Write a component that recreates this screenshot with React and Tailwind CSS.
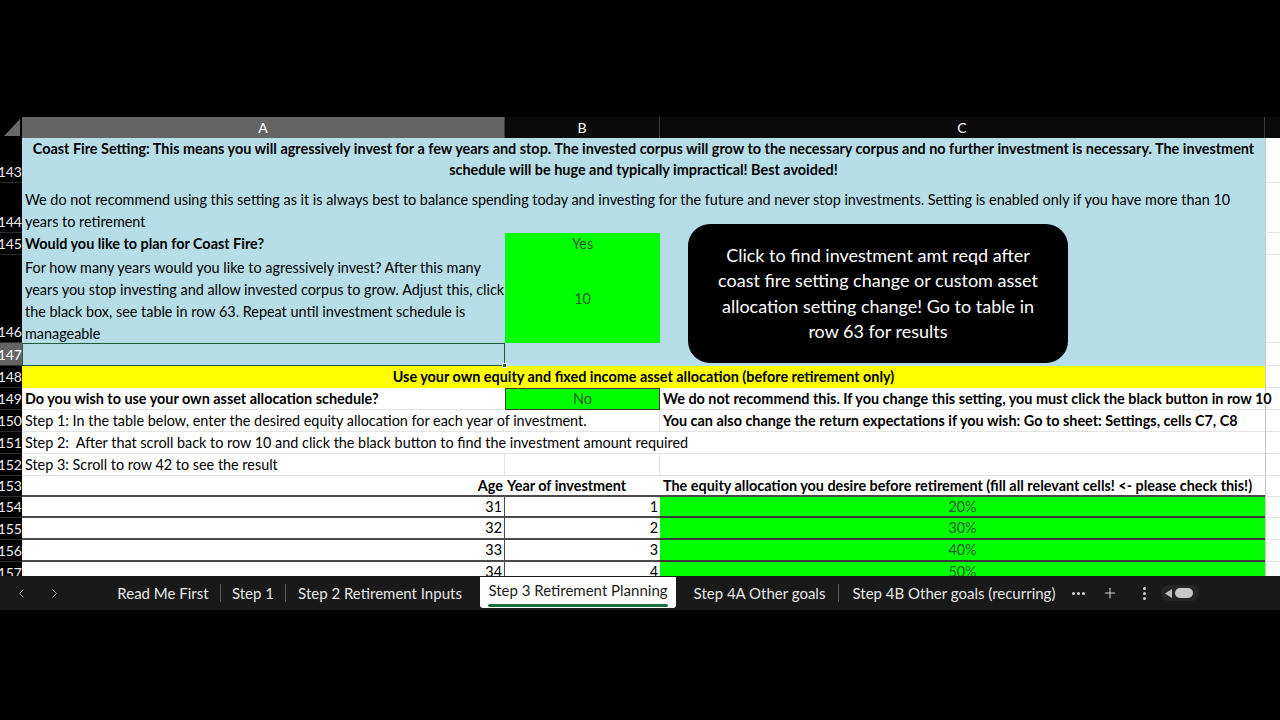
import React from "react";
import { ChevronLeft, ChevronRight, Plus } from "lucide-react";

const Row = ({ h, n, sel = false, children }) => (
  <div className={`flex ${h}`}>
    <div
      className={`w-[22px] shrink-0 flex items-end justify-end overflow-hidden border-b border-[#2e2e2e] text-[14px] leading-[20px] ${
        sel ? "bg-[#646464] text-white" : "bg-black text-[#eeeeee]"
      }`}
    >
      {n}
    </div>
    {children}
  </div>
);

const Dcell = ({ line = true }) => (
  <div className={`flex-1 bg-white border-l border-[#c8c8c8] ${line ? "border-b border-b-[#e3e3e3]" : ""}`} />
);

const ColumnHeader = () => (
  <div className="flex h-[21px] text-white text-[14px] leading-[21px]">
    <div className="w-[22px] shrink-0 bg-black flex items-end justify-end p-[2px]">
      <svg width="16" height="17" viewBox="0 0 16 17">
        <polygon points="16,0 16,17 0,17" fill="#6a6a6a" />
      </svg>
    </div>
    <div className="w-[483px] shrink-0 bg-[#646464] text-center border-r border-[#3a3a3a]">A</div>
    <div className="w-[155px] shrink-0 bg-[#0b0b0b] text-center border-r border-[#3a3a3a]">B</div>
    <div className="w-[605px] shrink-0 bg-[#0b0b0b] text-center border-r border-[#3a3a3a]">C</div>
    <div className="flex-1 bg-[#0b0b0b]" />
  </div>
);

const Tab = ({ w, children }) => (
  <div className={`${w} shrink-0 text-center whitespace-nowrap text-[#e6e6e6]`}>{children}</div>
);

const Sep = () => <div className="w-px h-[18px] bg-[#5a5a5a] shrink-0" />;

const TabBar = () => (
  <div className="h-[34px] bg-[#191919] flex items-center text-[15px]">
    <div className="w-[106px] shrink-0 flex items-center text-[#b0b0b0]">
      <ChevronLeft size={15} strokeWidth={1.5} className="ml-[14px]" />
      <ChevronRight size={15} strokeWidth={1.5} className="ml-[18px]" />
    </div>
    <Tab w="w-[114px]">Read Me First</Tab>
    <Sep />
    <Tab w="w-[64px]">Step 1</Tab>
    <Sep />
    <Tab w="w-[188px]">Step 2 Retirement Inputs</Tab>
    <div className="w-[6px] shrink-0" />
    <div className="w-[196px] h-[31px] self-start mt-[1px] shrink-0 bg-white rounded-b-[3px] flex flex-col items-center">
      <span className="text-[#1c1c1c] leading-[27px] whitespace-nowrap">Step 3 Retirement Planning</span>
      <div className="w-[180px] h-[3px] bg-[#1e7145] rounded-full" />
    </div>
    <Tab w="w-[162px] pl-[5px]">Step 4A Other goals</Tab>
    <Sep />
    <Tab w="w-[230px]">Step 4B Other goals (recurring)</Tab>
    <div className="w-[3px] shrink-0" />
    <div className="flex gap-[2px] items-center">
      <span className="w-[3px] h-[3px] rounded-full bg-[#d8d8d8]" />
      <span className="w-[3px] h-[3px] rounded-full bg-[#d8d8d8]" />
      <span className="w-[3px] h-[3px] rounded-full bg-[#d8d8d8]" />
    </div>
    <Plus size={16} strokeWidth={1.6} className="ml-[17px] text-[#d0d0d0]" />
    <div className="ml-[25px] flex flex-col gap-[2px] items-center">
      <span className="w-[3px] h-[3px] rounded-full bg-[#d0d0d0]" />
      <span className="w-[3px] h-[3px] rounded-full bg-[#d0d0d0]" />
      <span className="w-[3px] h-[3px] rounded-full bg-[#d0d0d0]" />
    </div>
    <div className="ml-[15px] w-[38px] h-[16px] rounded-full bg-[#262626] flex items-center px-[4px] gap-[3px]">
      <svg width="7" height="9" viewBox="0 0 7 9">
        <polygon points="7,0 7,9 0,4.5" fill="#bdbdbd" />
      </svg>
      <div className="w-[18px] h-[10px] rounded-full bg-[#c9c9c9]" />
    </div>
  </div>
);

export default function App() {
  return (
    <div className="w-[1280px] h-[720px] bg-black overflow-hidden font-['Lato',sans-serif] text-[14.4px] text-black">
      <div className="h-[117px]" />
      <div className="relative h-[459px] overflow-hidden">
        <ColumnHeader />

        <Row h="h-[45px]" n="143">
          <div className="w-[1243px] shrink-0 bg-[#b7dee8] font-bold text-center leading-[21px] whitespace-nowrap">
            Coast Fire Setting: This means you will agressively invest for a few years and stop. The invested corpus will grow to the necessary corpus and no further investment is necessary. The investment
            <br />
            schedule will be huge and typically impractical! Best avoided!
          </div>
          <Dcell />
        </Row>

        <Row h="h-[50px]" n="144">
          <div className="w-[1243px] shrink-0 bg-[#b7dee8] flex flex-col justify-end leading-[22px] pl-[3px] whitespace-nowrap">
            <span>
              We do not recommend using this setting as it is always best to balance spending today and investing for the future and never stop investments. Setting is enabled only if you have more than 10
            </span>
            <span>years to retirement</span>
          </div>
          <Dcell />
        </Row>

        <Row h="h-[22px]" n="145">
          <div className="w-[483px] shrink-0 bg-[#b7dee8] font-bold pl-[3px] leading-[22px]">Would you like to plan for Coast Fire?</div>
          <div className="w-[155px] shrink-0 bg-[#00ff00] text-center text-[#2b5c2b] leading-[22px]">Yes</div>
          <div className="w-[605px] shrink-0 bg-[#b7dee8]" />
          <Dcell />
        </Row>

        <Row h="h-[88px]" n="146">
          <div className="w-[483px] shrink-0 bg-[#b7dee8] pl-[3px] whitespace-nowrap overflow-hidden">
            <div className="flex flex-col leading-[22px] translate-y-[2px]">
              <span>For how many years would you like to agressively invest? After this many</span>
              <span>years you stop investing and allow invested corpus to grow. Adjust this, click</span>
              <span>the black box, see table in row 63. Repeat until investment schedule is</span>
              <span>manageable</span>
            </div>
          </div>
          <div className="w-[155px] shrink-0 bg-[#00ff00] flex items-center justify-center text-[#2b5c2b]">10</div>
          <div className="w-[605px] shrink-0 bg-[#b7dee8]" />
          <Dcell />
        </Row>

        <Row h="h-[23px]" n="147" sel>
          <div className="w-[483px] shrink-0 bg-[#b7dee8] relative border border-[#1f5c38]">
            <div className="absolute -right-[3px] -bottom-[3px] w-[5px] h-[5px] bg-[#1f5c38] border border-white" />
          </div>
          <div className="w-[155px] shrink-0 bg-[#b7dee8]" />
          <div className="w-[605px] shrink-0 bg-[#b7dee8]" />
          <Dcell />
        </Row>

        <Row h="h-[22px]" n="148">
          <div className="w-[1243px] shrink-0 bg-[#ffff00] font-bold text-center leading-[22px]">
            Use your own equity and fixed income asset allocation (before retirement only)
          </div>
          <Dcell />
        </Row>

        <Row h="h-[22px]" n="149">
          <div className="w-[483px] shrink-0 bg-white border-b border-[#e3e3e3] font-bold pl-[3px] leading-[21px]">
            Do you wish to use your own asset allocation schedule?
          </div>
          <div className="w-[155px] shrink-0 bg-[#00ff00] border border-[#3c3c3c] text-center text-[#2b5c2b] leading-[20px]">No</div>
          <div className="w-[605px] shrink-0 bg-white border-b border-[#e3e3e3] font-bold pl-[3px] leading-[21px] whitespace-nowrap relative z-10">
            We do not recommend this. If you change this setting, you must click the black button in row 10
          </div>
          <Dcell />
        </Row>

        <Row h="h-[22px]" n="150">
          <div className="w-[483px] shrink-0 bg-white border-b border-[#e3e3e3] pl-[3px] leading-[21px] whitespace-nowrap relative z-10">
            Step 1: In the table below, enter the desired equity allocation for each year of investment.
          </div>
          <div className="w-[155px] shrink-0 bg-white border-b border-r border-[#e3e3e3]" />
          <div className="w-[605px] shrink-0 bg-white border-b border-[#e3e3e3] font-bold pl-[3px] leading-[21px] whitespace-nowrap">
            You can also change the return expectations if you wish: Go to sheet: Settings, cells C7, C8
          </div>
          <Dcell />
        </Row>

        <Row h="h-[22px]" n="151">
          <div className="w-[1243px] shrink-0 bg-white border-b border-[#e3e3e3] pl-[3px] leading-[21px] whitespace-pre">
            Step 2:  After that scroll back to row 10 and click the black button to find the investment amount required
          </div>
          <Dcell />
        </Row>

        <Row h="h-[22px]" n="152">
          <div className="w-[483px] shrink-0 bg-white border-b border-r border-[#e3e3e3] pl-[3px] leading-[21px]">
            Step 3: Scroll to row 42 to see the result
          </div>
          <div className="w-[155px] shrink-0 bg-white border-b border-r border-[#e3e3e3]" />
          <div className="w-[605px] shrink-0 bg-white border-b border-[#e3e3e3]" />
          <Dcell />
        </Row>

        <Row h="h-[21px]" n="153">
          <div className="w-[483px] shrink-0 bg-white border-b-2 border-[#4a4a4a] font-bold text-right pr-[2px] leading-[19px]">Age</div>
          <div className="w-[155px] shrink-0 bg-white border-b-2 border-[#4a4a4a] font-bold pl-[2px] leading-[19px] whitespace-nowrap">
            Year of investment
          </div>
          <div className="w-[605px] shrink-0 bg-white border-b-2 border-[#4a4a4a] font-bold pl-[3px] leading-[19px] whitespace-nowrap">
            The equity allocation you desire before retirement (fill all relevant cells! &lt;- please check this!)
          </div>
          <Dcell />
        </Row>

        {[
          ["154", "31", "1", "20%", "h-[21px]"],
          ["155", "32", "2", "30%", "h-[22px]"],
          ["156", "33", "3", "40%", "h-[22px]"],
          ["157", "34", "4", "50%", "h-[22px]"],
        ].map(([n, age, yr, pct, h]) => (
          <Row key={n} h={h} n={n}>
            <div className="w-[483px] shrink-0 bg-white border-b-2 border-r border-[#4a4a4a] text-right pr-[2px] leading-[19px]">{age}</div>
            <div className="w-[155px] shrink-0 bg-white border-b-2 border-[#4a4a4a] text-right pr-[2px] leading-[19px]">{yr}</div>
            <div className="w-[605px] shrink-0 bg-[#00ff00] border-b-2 border-[#3a3a3a] text-center text-[#2b5c2b] leading-[19px]">{pct}</div>
            <Dcell />
          </Row>
        ))}

        <div className="absolute left-[688px] top-[107px] w-[380px] h-[139px] rounded-[22px] bg-black text-white text-[18px] leading-[25.5px] flex items-center justify-center text-center">
          <p>
            Click to find investment amt reqd after
            <br />
            coast fire setting change or custom asset
            <br />
            allocation setting change! Go to table in
            <br />
            row 63 for results
          </p>
        </div>
      </div>
      <TabBar />
    </div>
  );
}
